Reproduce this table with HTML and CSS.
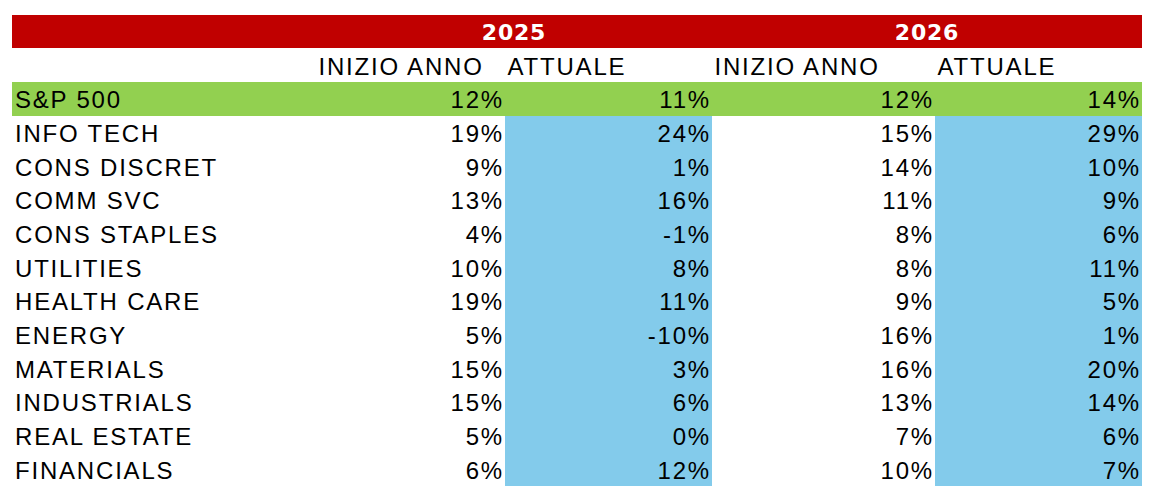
FILE: index.html
```html
<!DOCTYPE html>
<html lang="it">
<head>
<meta charset="utf-8">
<title>Stime utili settori S&amp;P 500</title>
<link rel="stylesheet" href="styles.css">
</head>
<body>
<div class="sheet">
  <div class="year-bar"><span></span><span class="year">2025</span><span class="year">2026</span></div>
  <div class="grid sub">
    <div class="cell"></div>
    <div class="cell head">INIZIO ANNO</div>
    <div class="cell head">ATTUALE</div>
    <div class="cell head">INIZIO ANNO</div>
    <div class="cell head">ATTUALE</div>
  </div>
  <div class="grid row green">
    <div class="cell label">S&amp;P 500</div>
    <div class="cell num">12%</div>
    <div class="cell num">11%</div>
    <div class="cell num">12%</div>
    <div class="cell num">14%</div>
  </div>
  <div class="grid row"><div class="cell label">INFO TECH</div><div class="cell num">19%</div><div class="cell num blue">24%</div><div class="cell num">15%</div><div class="cell num blue">29%</div></div>
  <div class="grid row"><div class="cell label">CONS DISCRET</div><div class="cell num">9%</div><div class="cell num blue">1%</div><div class="cell num">14%</div><div class="cell num blue">10%</div></div>
  <div class="grid row"><div class="cell label">COMM SVC</div><div class="cell num">13%</div><div class="cell num blue">16%</div><div class="cell num">11%</div><div class="cell num blue">9%</div></div>
  <div class="grid row"><div class="cell label">CONS STAPLES</div><div class="cell num">4%</div><div class="cell num blue">-1%</div><div class="cell num">8%</div><div class="cell num blue">6%</div></div>
  <div class="grid row"><div class="cell label">UTILITIES</div><div class="cell num">10%</div><div class="cell num blue">8%</div><div class="cell num">8%</div><div class="cell num blue">11%</div></div>
  <div class="grid row"><div class="cell label">HEALTH CARE</div><div class="cell num">19%</div><div class="cell num blue">11%</div><div class="cell num">9%</div><div class="cell num blue">5%</div></div>
  <div class="grid row"><div class="cell label">ENERGY</div><div class="cell num">5%</div><div class="cell num blue">-10%</div><div class="cell num">16%</div><div class="cell num blue">1%</div></div>
  <div class="grid row"><div class="cell label">MATERIALS</div><div class="cell num">15%</div><div class="cell num blue">3%</div><div class="cell num">16%</div><div class="cell num blue">20%</div></div>
  <div class="grid row"><div class="cell label">INDUSTRIALS</div><div class="cell num">15%</div><div class="cell num blue">6%</div><div class="cell num">13%</div><div class="cell num blue">14%</div></div>
  <div class="grid row"><div class="cell label">REAL ESTATE</div><div class="cell num">5%</div><div class="cell num blue">0%</div><div class="cell num">7%</div><div class="cell num blue">6%</div></div>
  <div class="grid row"><div class="cell label">FINANCIALS</div><div class="cell num">6%</div><div class="cell num blue">12%</div><div class="cell num">10%</div><div class="cell num blue">7%</div></div>
</div>
</body>
</html>
```

FILE: styles.css
```css
html, body {
  margin: 0;
  padding: 0;
  background: #ffffff;
}

body {
  font-family: "Liberation Sans", Arial, sans-serif;
  color: #000000;
}

.sheet {
  padding: 15px 0 0 12px;
  width: 1130px;
}

.grid {
  display: grid;
  grid-template-columns: 304px 189px 207px 223px 207px;
}

.year-bar {
  height: 33px;
  background: #c00000;
  display: grid;
  grid-template-columns: 304px 396px 430px;
  align-items: center;
}

.year {
  font-family: "DejaVu Sans", sans-serif;
  font-weight: bold;
  font-size: 22px;
  letter-spacing: 0.8px;
  color: #ffffff;
  text-align: center;
  padding-top: 1px;
}

.cell {
  display: flex;
  align-items: center;
  font-size: 24px;
  letter-spacing: 1.8px;
  white-space: nowrap;
  padding-top: 3px;
  box-sizing: border-box;
}

.sub .cell {
  height: 34px;
}

.head {
  padding-left: 2.5px;
}

.row .cell {
  height: 33.67px;
}

.label {
  padding-left: 3px;
}

.num {
  justify-content: flex-end;
  padding-right: 1px;
}

.green .cell {
  background: #92d050;
}

.blue {
  background: #83cbeb;
}
```
